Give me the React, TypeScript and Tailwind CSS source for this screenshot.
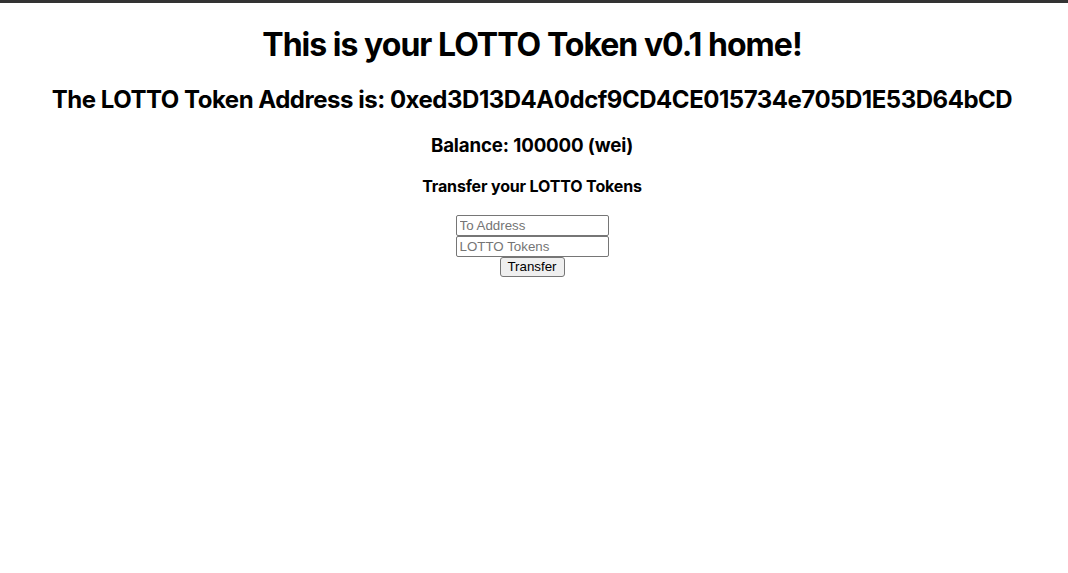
import React from "react";

export default function App() {
  return (
    <div className="min-h-[573px] bg-white border-t-[3px] border-[#333333] text-center text-black pr-[4px]" style={{ fontFamily: "Inter, 'Noto Sans', sans-serif" }}>
      <h1 className="text-[32px] font-bold leading-[39px] pt-[22px] tracking-[-0.98px]">This is your LOTTO Token v0.1 home!</h1>
      <h2 className="text-[24px] font-bold leading-[29px] mt-[21px] tracking-[-0.48px]">The LOTTO Token Address is: 0xed3D13D4A0dcf9CD4CE015734e705D1E53D64bCD</h2>
      <h3 className="text-[18.72px] font-bold leading-[23px] mt-[20px] tracking-[-0.14px]">Balance: 100000 (wei)</h3>
      <h4 className="text-[16px] font-bold leading-[19px] mt-[20px] tracking-[-0.15px]">Transfer your LOTTO Tokens</h4>
      <form className="flex flex-col items-center mt-[19px]" style={{ fontFamily: "'Liberation Sans', Arial, sans-serif" }} onSubmit={(e) => e.preventDefault()}>
        <input
          type="text"
          placeholder="To Address"
          className="block w-[153px] h-[21px] border border-[#767676] rounded-[2px] px-[3px] text-[13.33px] text-black placeholder:text-[#757575] bg-white outline-none"
        />
        <input
          type="text"
          placeholder="LOTTO Tokens"
          className="block w-[153px] h-[21px] border border-[#767676] rounded-[2px] px-[3px] text-[13.33px] text-black placeholder:text-[#757575] bg-white outline-none"
        />
        <button
          type="submit"
          className="w-[65px] h-[20px] border border-[#767676] rounded-[3px] bg-[#efefef] text-[13.33px] leading-[18px] text-black"
        >
          Transfer
        </button>
      </form>
    </div>
  );
}
